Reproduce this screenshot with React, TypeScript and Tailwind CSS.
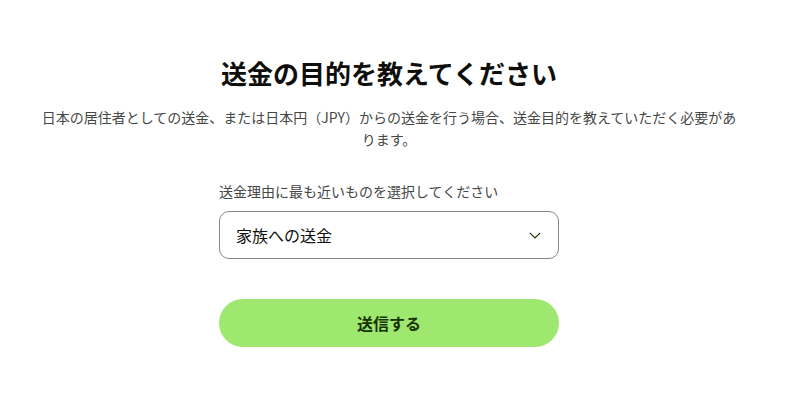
const jp = { fontFamily: '"Noto Sans CJK JP", "Noto Sans", sans-serif' }

const App = () => {
    return (
        <div className="min-h-screen bg-white pt-[56px] w-[778px]" style={jp}>
            <div className="mx-auto w-[700px] flex flex-col items-center">
                <h1 className="text-[26px] leading-[34px] font-bold text-[#0e0f0c]">送金の目的を教えてください</h1>
                <p className="mt-[16px] text-[14px] leading-[22px] text-[#454745] text-center">
                    日本の居住者としての送金、または日本円（JPY）からの送金を行う場合、送金目的を教えていただく必要があります。
                </p>

                <div className="mt-[31px] w-[340px] flex flex-col">
                    <label className="text-[14px] leading-[20px] text-[#454745]">送金理由に最も近いものを選択してください</label>
                    <button className="mt-[10px] h-[48px] w-full flex items-center justify-between rounded-[10px] border border-[#868685] pl-[16px] pr-[16px] text-[16px] text-[#0e0f0c]">
                        <span>家族への送金</span>
                        <svg width="12" height="7" viewBox="0 0 12 7" fill="none" className="mr-[1px]">
                            <path d="M0.8 0.8l5.2 5.2 5.2-5.2" stroke="#163300" strokeWidth="1.2" />
                        </svg>
                    </button>

                    <button className="mt-[40px] h-[48px] w-full rounded-full bg-[#9fe870] text-[16px] font-bold text-[#163300]">
                        送信する
                    </button>
                </div>
            </div>
        </div>
    )
}

export default App
